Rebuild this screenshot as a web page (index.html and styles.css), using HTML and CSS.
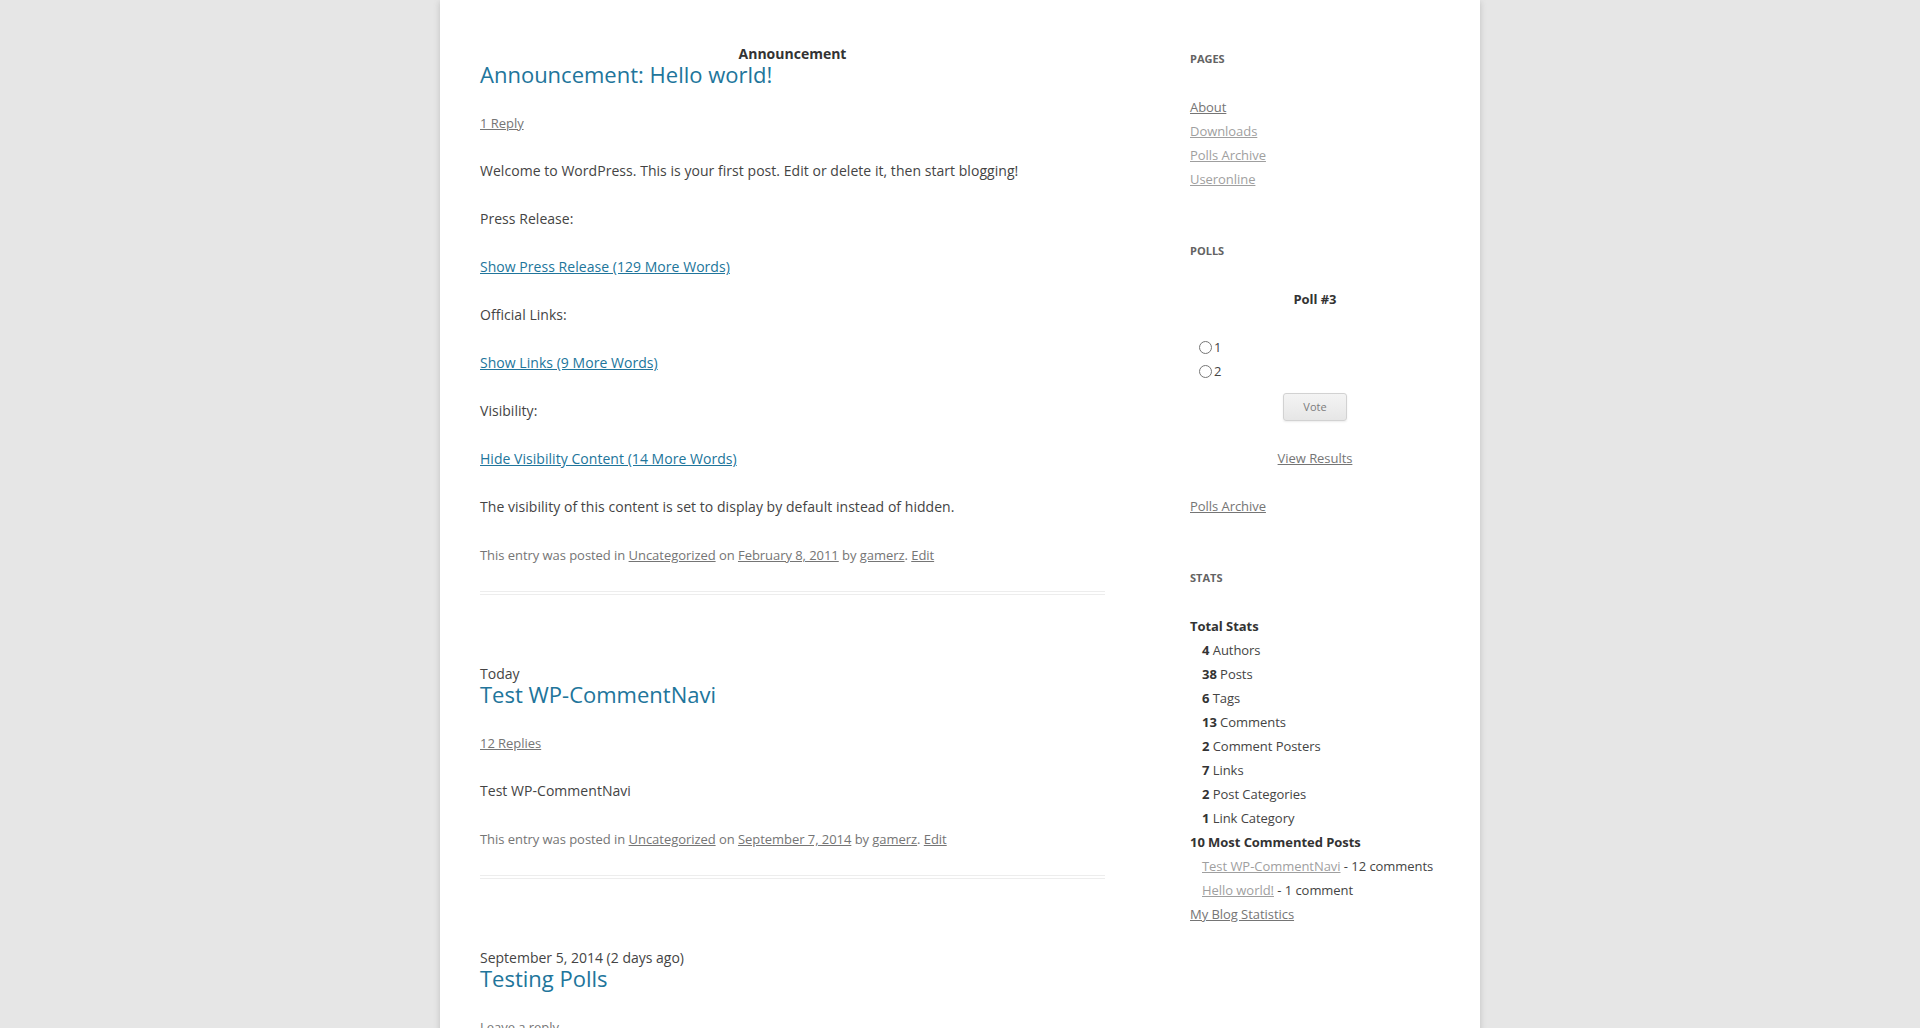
FILE: index.html
```html
<!DOCTYPE html>
<html lang="en">
<head>
<meta charset="utf-8">
<title>Blog</title>
<link rel="stylesheet" href="styles.css">
</head>
<body>
<div class="site">
  <div class="main">
    <div class="content">
      <article class="post">
        <header class="entry-header">
          <div class="post-label post-label-center"><strong>Announcement</strong></div>
          <h1 class="entry-title"><a href="#">Announcement: Hello world!</a></h1>
          <div class="comments-link"><a href="#">1 Reply</a></div>
        </header>
        <div class="entry-content">
          <p>Welcome to WordPress. This is your first post. Edit or delete it, then start blogging!</p>
          <p>Press Release:</p>
          <p><a href="#">Show Press Release (129 More Words)</a></p>
          <p>Official Links:</p>
          <p><a href="#">Show Links (9 More Words)</a></p>
          <p>Visibility:</p>
          <p><a href="#">Hide Visibility Content (14 More Words)</a></p>
          <p>The visibility of this content is set to display by default instead of hidden.</p>
        </div>
        <footer class="entry-meta">This entry was posted in <a href="#">Uncategorized</a> on <a href="#">February 8, 2011</a> by <a href="#">gamerz</a>. <a href="#">Edit</a></footer>
      </article>

      <article class="post">
        <header class="entry-header">
          <div class="post-label">Today</div>
          <h1 class="entry-title"><a href="#">Test WP-CommentNavi</a></h1>
          <div class="comments-link"><a href="#">12 Replies</a></div>
        </header>
        <div class="entry-content">
          <p>Test WP-CommentNavi</p>
        </div>
        <footer class="entry-meta">This entry was posted in <a href="#">Uncategorized</a> on <a href="#">September 7, 2014</a> by <a href="#">gamerz</a>. <a href="#">Edit</a></footer>
      </article>

      <article class="post">
        <header class="entry-header">
          <div class="post-label">September 5, 2014 (2 days ago)</div>
          <h1 class="entry-title"><a href="#">Testing Polls</a></h1>
          <div class="comments-link"><a href="#">Leave a reply</a></div>
        </header>
        <div class="entry-content">
          <p>Testing polls inside a post.</p>
        </div>
        <footer class="entry-meta">This entry was posted in <a href="#">Uncategorized</a> on <a href="#">September 5, 2014</a> by <a href="#">gamerz</a>. <a href="#">Edit</a></footer>
      </article>
    </div>

    <aside class="sidebar">
      <section class="widget">
        <h3 class="widget-title">Pages</h3>
        <ul class="widget-list">
          <li><a href="#">About</a></li>
          <li><a href="#" class="visited">Downloads</a></li>
          <li><a href="#" class="visited">Polls Archive</a></li>
          <li><a href="#" class="visited">Useronline</a></li>
        </ul>
      </section>

      <section class="widget">
        <h3 class="widget-title">Polls</h3>
        <div class="poll">
          <p class="poll-question"><strong>Poll #3</strong></p>
          <ul class="poll-answers">
            <li><input type="radio" name="poll3" id="a1"><label for="a1">1</label></li>
            <li><input type="radio" name="poll3" id="a2"><label for="a2">2</label></li>
          </ul>
          <div class="vote-row"><button type="button" class="vote-btn">Vote</button></div>
          <p class="poll-results"><a href="#">View Results</a></p>
        </div>
        <ul class="widget-list">
          <li><a href="#">Polls Archive</a></li>
        </ul>
      </section>

      <section class="widget">
        <h3 class="widget-title">Stats</h3>
        <ul class="widget-list">
          <li><strong>Total Stats</strong>
            <ul class="sub-list">
              <li><strong>4</strong> Authors</li>
              <li><strong>38</strong> Posts</li>
              <li><strong>6</strong> Tags</li>
              <li><strong>13</strong> Comments</li>
              <li><strong>2</strong> Comment Posters</li>
              <li><strong>7</strong> Links</li>
              <li><strong>2</strong> Post Categories</li>
              <li><strong>1</strong> Link Category</li>
            </ul>
          </li>
          <li><strong>10 Most Commented Posts</strong>
            <ul class="sub-list">
              <li><a href="#" class="visited">Test WP-CommentNavi</a> - 12 comments</li>
              <li><a href="#" class="visited">Hello world!</a> - 1 comment</li>
            </ul>
          </li>
        </ul>
        <ul class="widget-list">
          <li><a href="#">My Blog Statistics</a></li>
        </ul>
      </section>
    </aside>
  </div>
</div>
</body>
</html>
```

FILE: styles.css
```css
html {
  scrollbar-width: none;
}

body {
  margin: 0;
  background: #e6e6e6;
  font-family: "Open Sans", "Noto Sans", sans-serif;
  font-size: 14px;
  line-height: 24px;
  color: #444;
}

.site {
  max-width: 960px;
  margin: 0 auto;
  padding: 0 40px;
  background: #fff;
  box-shadow: 0 2px 6px rgba(100, 100, 100, 0.3);
  min-height: 100vh;
}

.main {
  display: flex;
  justify-content: space-between;
  align-items: flex-start;
}

.content {
  width: 625px;
  padding-top: 44px;
}

.post {
  border-bottom: 4px double #ededed;
  padding-bottom: 24px;
  margin-bottom: 69px;
}

.entry-header {
  margin-bottom: 24px;
}

.post-label {
  line-height: 20px;
  margin-bottom: -2px;
  font-size: 14px;
}

.post-label-center {
  text-align: center;
}

.post-label strong {
  font-weight: 700;
  color: #333;
}

.entry-title {
  margin: 0;
  font-size: 22px;
  line-height: 24px;
  font-weight: 400;
}

.entry-title a {
  color: #21759b;
  text-decoration: none;
}

.comments-link {
  margin-top: 25px;
  font-size: 13px;
  line-height: 24px;
  letter-spacing: -0.04px;
}

.comments-link a,
.entry-meta a {
  color: #757575;
}

.entry-content p {
  margin: 0 0 24px;
  letter-spacing: 0.04px;
}

.entry-content a {
  color: #21759b;
}

.entry-meta {
  margin-top: 24px;
  font-size: 13px;
  line-height: 24px;
  color: #757575;
  letter-spacing: -0.05px;
}

.sidebar {
  width: 250px;
  padding-top: 47px;
}

.widget {
  margin-bottom: 48px;
  font-size: 13px;
  line-height: 24px;
  letter-spacing: -0.05px;
}

.widget-title {
  margin: 0 0 24px;
  font-size: 11px;
  line-height: 24px;
  font-weight: 700;
  text-transform: uppercase;
  color: #636363;
  letter-spacing: 0;
}

.widget-list,
.sub-list,
.poll-answers {
  list-style: none;
  margin: 0;
  padding: 0;
}

.sub-list {
  margin-left: 12px;
}

.widget a {
  color: #757575;
}

.widget a.visited {
  color: #9f9f9f;
}

.widget strong {
  color: #333;
}

.poll-question {
  margin: 0 0 24px;
  text-align: center;
}

.poll-answers {
  margin: 0 0 10px 9px;
}

.poll-answers li {
  display: flex;
  align-items: center;
  height: 24px;
}

.poll-answers input {
  margin: 0 2px 0 0;
  width: 13px;
  height: 13px;
}

.vote-row {
  display: flex;
  justify-content: center;
  padding-bottom: 1px;
  margin-bottom: 24px;
}

.vote-btn {
  font-family: "Open Sans", "Noto Sans", sans-serif;
  font-size: 11px;
  line-height: 16px;
  height: 28px;
  padding: 5px 19px;
  color: #7c7c7c;
  background: linear-gradient(#f4f4f4, #e6e6e6);
  border: 1px solid #d2d2d2;
  border-radius: 3px;
  box-shadow: 0 1px 2px rgba(64, 64, 64, 0.1);
}

.poll-results {
  margin: 0 0 24px;
  text-align: center;
}
```
